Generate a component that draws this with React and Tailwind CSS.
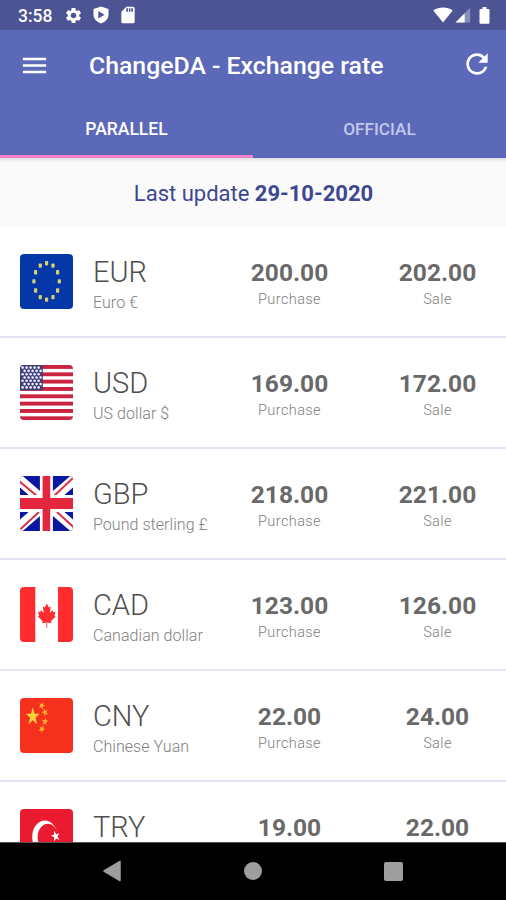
import { MdMenu, MdRefresh, MdSdCard, MdSettings } from 'react-icons/md';

const STAR = '0,-10 2.4,-3.1 9.5,-3.1 3.8,1.2 5.9,8.1 0,3.9 -5.9,8.1 -3.8,1.2 -9.5,-3.1 -2.4,-3.1';

function FlagEU() {
  const stars = Array.from({ length: 12 }, (_, i) => (i * Math.PI) / 6);
  return (
    <>
      <rect width="53" height="55" fill="#0437a8" />
      {stars.map((a) => (
        <rect
          key={a}
          x={26.6 + 12.7 * Math.sin(a) - 1.6}
          y={27.4 - 18.2 * Math.cos(a) - 2.2}
          width="3.2"
          height="4.4"
          rx="0.8"
          fill="#d9d070"
        />
      ))}
    </>
  );
}

function FlagUS() {
  const rows = [0, 1, 2, 3, 4, 5, 6];
  const cols = [0, 1, 2, 3, 4];
  return (
    <>
      <rect width="53" height="55" fill="#fff" />
      {Array.from({ length: 8 }, (_, i) => (
        <rect key={i} y={i * 7.334} width="53" height="3.9" fill="#ca2440" />
      ))}
      <rect width="22.8" height="25.2" fill="#3f3f75" />
      {rows.map((r) =>
        cols.map((c) => (
          <circle
            key={`${r}-${c}`}
            cx={2.6 + c * 4 + (r % 2) * 2}
            cy={2.6 + r * 3.3}
            r="1.3"
            fill="#eef"
          />
        ))
      )}
    </>
  );
}

function FlagGB() {
  return (
    <>
      <rect width="53" height="55" fill="#0a17a0" />
      <path d="M-3 2 56 53M56 2-3 53" stroke="#fff" strokeWidth="10.5" />
      <path d="M-1 5 17 20M53.5 1.5 34 20M37 36 54 51.5M-.5 54 19 36" stroke="#d9304c" strokeWidth="2" />
      <path d="M26.4 0v55" stroke="#fff" strokeWidth="13" />
      <path d="M0 27.4h53" stroke="#fff" strokeWidth="17" />
      <path d="M26.4 0v55" stroke="#e4273f" strokeWidth="7.6" />
      <path d="M0 27.4h53" stroke="#e4273f" strokeWidth="11" />
    </>
  );
}

function FlagCA() {
  return (
    <>
      <rect width="53" height="55" fill="#fff" />
      <rect width="15.3" height="55" fill="#ff2d30" />
      <rect x="38" width="15" height="55" fill="#ff2d30" />
      <path
        d="M26.8 16.5l-2 4-2-1 1 6.5-2.8-3-.6 2-2.3-.3 1 4-1.2.8 4.7 4.8-.5 2 4.3-.9v5.6h.8v-5.6l4.3.9-.5-2 4.7-4.8-1.2-.8 1-4-2.3.3-.6-2-2.8 3 1-6.5-2 1z"
        fill="#ff2d30"
      />
    </>
  );
}

function FlagCN() {
  const small = [
    [21.8, 7.6, 20],
    [25, 14.3, -20],
    [25, 23.6, 10],
    [21.8, 31, 30],
  ];
  return (
    <>
      <rect width="53" height="55" fill="#f5301c" />
      <polygon points={STAR} fill="#fdd33c" transform="translate(12.8 18.6) scale(0.72 0.95)" />
      {small.map(([x, y, r]) => (
        <polygon
          key={y}
          points={STAR}
          fill="#fbb030"
          stroke="#fbb030"
          strokeWidth="6"
          transform={`translate(${x} ${y}) rotate(${r}) scale(0.18 0.22)`}
        />
      ))}
    </>
  );
}

function FlagTR() {
  return (
    <>
      <rect width="53" height="55" fill="#ea1a30" />
      <ellipse cx="24.8" cy="28" rx="12.6" ry="16.6" fill="#fff" />
      <ellipse cx="27.8" cy="28" rx="10.2" ry="13.2" fill="#ea1a30" />
      <polygon points={STAR} fill="#fff" transform="translate(35.6 27.2) rotate(-15) scale(0.46 0.58)" />
    </>
  );
}

const rates = [
  { code: 'EUR', name: 'Euro €', purchase: '200.00', sale: '202.00', Flag: FlagEU },
  { code: 'USD', name: 'US dollar $', purchase: '169.00', sale: '172.00', Flag: FlagUS },
  { code: 'GBP', name: 'Pound sterling £', purchase: '218.00', sale: '221.00', Flag: FlagGB },
  { code: 'CAD', name: 'Canadian dollar', purchase: '123.00', sale: '126.00', Flag: FlagCA },
  { code: 'CNY', name: 'Chinese Yuan', purchase: '22.00', sale: '24.00', Flag: FlagCN },
  // sits half under the navigation bar, so only its first line is shown
  { code: 'TRY', purchase: '19.00', sale: '22.00', Flag: FlagTR },
];

function StatusBar() {
  return (
    <div className="h-[30px] shrink-0 bg-[#4c5494] flex items-center justify-between pl-[18px] pr-[16px] text-white">
      <div className="flex items-center">
        <span className="pt-[2px] w-[46px] text-[17.5px] leading-[30px] font-medium">3:58</span>
        <MdSettings className="size-[19px]" />
        <svg className="ml-[10px] w-[16px] h-[18px]" viewBox="0 0 16 18">
          <path d="M8 .5 15.5 3v5.5c0 4-3 7.5-7.5 9C3.5 16 .5 12.5.5 8.5V3z" fill="#fff" />
          <path d="M5.3 5v7.4L11.6 8.7z" fill="#4c5494" />
        </svg>
        <MdSdCard className="ml-[9px] size-[20px]" />
      </div>
      <div className="flex items-center">
        <svg className="w-[20px] h-[16px]" viewBox="0 0 20 16">
          <path d="M10 15.5.3 3.600C3 1.500 6.300.4 10 .4s7 1.100 9.700 3.200z" fill="#fff" />
        </svg>
        <svg className="ml-[2px] w-[16px] h-[16px]" viewBox="0 0 16 16">
          <path d="M15.2.8V15.5H.5z" fill="#fff" opacity=".35" />
          <path d="M9.700 6.300V15.500H.5z" fill="#fff" />
        </svg>
        <svg className="ml-[8px] w-[11px] h-[17px]" viewBox="0 0 11 17">
          <path d="M3.5 0h4v2h2a1 1 0 0 1 1 1v12.700a1 1 0 0 1-1 1h-8a1 1 0 0 1-1-1V3a1 1 0 0 1 1-1h2z" fill="#fff" />
        </svg>
      </div>
    </div>
  );
}

function Header() {
  return (
    <header className="h-[128px] shrink-0 bg-[#5c69b9] text-white flex flex-col">
      <div className="h-[70px] flex items-center pl-[19px] pr-[13px]">
        <MdMenu className="size-[31px]" />
        <h1 className="ml-[39px] pt-[2px] flex-1 text-[24.8px] font-medium whitespace-nowrap">
          ChangeDA - Exchange rate
        </h1>
        <MdRefresh className="size-[32px] -mt-[2px]" />
      </div>
      <nav className="h-[58px] grid grid-cols-2 text-[17.5px] font-medium text-center">
        <button className="h-[58px] pt-[4px] border-b-[3px] border-[#ee82cd]">PARALLEL</button>
        <button className="h-[58px] pt-[4px] border-b-[3px] border-transparent text-[#c1c8ea] text-[17.2px]">
          OFFICIAL
        </button>
      </nav>
    </header>
  );
}

function Amount({ value, label }) {
  return (
    <div className="w-[78px] shrink-0 flex flex-col items-center whitespace-nowrap">
      <span className="text-[24.5px] leading-[30px] font-bold text-[#696969]">{value}</span>
      {label && (
        <span className="mt-px text-[14.5px] leading-[22px] tracking-[0.4px] font-light text-[#808080]">
          {label}
        </span>
      )}
    </div>
  );
}

function RateRow({ code, name, purchase, sale, Flag }) {
  return (
    <li className="h-[111.1px] shrink-0 flex items-start pl-[20px] pr-[29.5px] border-b-2 border-[#e4e5f4]">
      <svg className="mt-[27px] w-[53px] h-[55px] shrink-0 rounded-[4px]" viewBox="0 0 53 55">
        <Flag />
      </svg>
      <div className="mt-[30px] ml-[20px] flex-1 whitespace-nowrap">
        <div className="text-[29px] leading-[30px] font-light text-[#4f4f4f]">{code}</div>
        {name && (
          <div className="mt-[4px] text-[16px] leading-[24px] tracking-[0.05px] font-light text-[#808080]">
            {name}
          </div>
        )}
      </div>
      <div className="mt-[31px] flex gap-[70px]">
        <Amount value={purchase} label={name && 'Purchase'} />
        <Amount value={sale} label={name && 'Sale'} />
      </div>
    </li>
  );
}

function NavBar() {
  return (
    <div className="h-[58px] shrink-0 bg-black border-t border-[#555] flex items-center justify-between pb-px pl-[102px] pr-[103px]">
      <svg className="w-[20px] h-[22px]" viewBox="0 0 20 22">
        <path d="M18 1.5v19L2 11z" fill="#9e9e9e" stroke="#9e9e9e" strokeWidth="1.5" strokeLinejoin="round" />
      </svg>
      <span className="size-[18px] rounded-full bg-[#9e9e9e]" />
      <span className="size-[19px] rounded-[2px] bg-[#9e9e9e]" />
    </div>
  );
}

export default function App() {
  return (
    <div className="w-[506px] h-[900px] overflow-hidden flex flex-col bg-white font-['Roboto',sans-serif]">
      <StatusBar />
      <Header />
      <div className="h-[69px] shrink-0 bg-[linear-gradient(#dedede,#fafafa_4px)] pt-px pl-px flex items-center justify-center text-[22px] text-[#3d4791] whitespace-pre">
        Last update <b className="font-bold">29-10-2020</b>
      </div>
      <ul className="flex-1 min-h-0 overflow-hidden flex flex-col">
        {rates.map((rate) => (
          <RateRow key={rate.code} {...rate} />
        ))}
      </ul>
      <NavBar />
    </div>
  );
}
